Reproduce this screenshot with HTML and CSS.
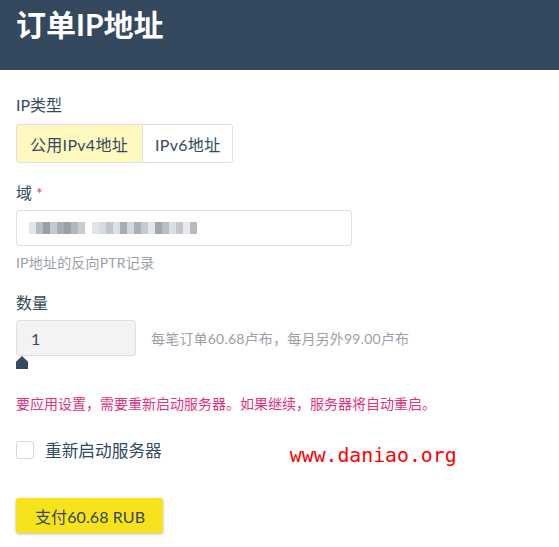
FILE: index.html
```html
<!DOCTYPE html>
<html lang="zh">
<head>
<meta charset="utf-8">
<link rel="stylesheet" href="styles.css">
</head>
<body>
<header class="header">
  <h1 class="title">订单IP地址</h1>
</header>
<main class="content">
  <div class="field field-type">
    <div class="label">IP类型</div>
    <div class="toggle">
      <button class="toggle-btn active">公用IPv4地址</button>
      <button class="toggle-btn">IPv6地址</button>
    </div>
  </div>
  <div class="field field-domain">
    <div class="label">域 <span class="req">*</span></div>
    <div class="input input-wide">
      <div class="blur">
        <i style="background:#e4e6e9"></i><i style="background:#b7bcc3"></i><i style="background:#9aa0a8"></i><i style="background:#c6cad0"></i><i style="background:#a7adb5"></i><i style="background:#9aa0a8"></i><i style="background:#b2b7be"></i><i style="background:#c9ccd1"></i><i style="background:#fff"></i><i style="background:#e2e4e7"></i><i style="background:#d6d9dd"></i><i style="background:#c1c5cb"></i><i style="background:#dde0e3"></i><i style="background:#a7adb5"></i><i style="background:#d4d7db"></i><i style="background:#aab0b7"></i><i style="background:#c6cad0"></i><i style="background:#e3e5e8"></i><i style="background:#a0a6ae"></i><i style="background:#b9bec4"></i><i style="background:#dde0e3"></i><i style="background:#c3c7cc"></i><i style="background:#e7e9eb"></i><i style="background:#b7bcc3"></i>
      </div>
    </div>
    <div class="help">IP地址的反向PTR记录</div>
  </div>
  <div class="field field-qty">
    <div class="label">数量</div>
    <div class="qty-row">
      <div class="input input-qty">1</div>
      <div class="qty-note">每笔订单60.68卢布，每月另外99.00卢布</div>
    </div>
    <div class="slider-mark"></div>
  </div>
  <p class="warn">要应用设置，需要重新启动服务器。如果继续，服务器将自动重启。</p>
  <div class="check-row">
    <label class="check"><span class="box"></span><span class="check-text">重新启动服务器</span></label>
    <span class="watermark">www.daniao.org</span>
  </div>
  <button class="pay">支付60.68 RUB</button>
</main>
</body>
</html>
```

FILE: styles.css
```css
* { box-sizing: border-box; }
html, body { margin: 0; padding: 0; background: #fff; }
body {
  font-family: Lato, "Noto Sans CJK SC", sans-serif;
  color: #34495e;
  width: 559px;
  height: 547px;
  overflow: hidden;
}
.header {
  background: #34495e;
  height: 70px;
  padding: 0 16px;
}
.title {
  margin: 0;
  font-size: 30px;
  font-weight: 700;
  color: #fff;
  line-height: 46px;
  padding-top: 1px;
}
.content { padding: 0 16px; }
.label {
  font-size: 16px;
  line-height: 22px;
}
.req { color: #e0327f; }
.field-type { padding-top: 24px; }
.field-type .label { margin-bottom: 8px; }
.toggle {
  display: inline-flex;
  border: 1px solid #dcdfe3;
  border-radius: 3px;
  height: 39px;
  overflow: hidden;
}
.toggle-btn {
  font-family: inherit;
  font-size: 16px;
  letter-spacing: 0.3px;
  color: #34495e;
  background: #fff;
  border: none;
  padding: 0 12px 0 12px;
  margin: 0;
  height: 100%;
}
.toggle-btn.active {
  background: #fff9c0;
  border-right: 1px solid #dcdfe3;
  padding: 0 14px 0 13px;
}
.field-domain { padding-top: 19px; }
.field-domain .label { margin-bottom: 6px; }
.input {
  border: 1px solid #dcdfe3;
  border-radius: 3px;
  height: 36px;
  font-size: 16px;
  display: flex;
  align-items: center;
}
.input-wide { width: 336px; padding-left: 12px; }
.blur { display: flex; height: 12px; }
.blur i { display: block; width: 7px; height: 12px; }
.help {
  font-size: 14px;
  color: #9aa0a7;
  margin-top: 6px;
  line-height: 22px;
  letter-spacing: 0.2px;
}
.field-qty { padding-top: 18px; }
.field-qty .label { margin-bottom: 6px; }
.qty-row { display: flex; align-items: center; gap: 15px; }
.input-qty {
  width: 120px;
  background: #f3f3f3;
  padding-left: 14px;
}
.qty-note { font-size: 14px; color: #9aa0a7; letter-spacing: 0.2px; }
.slider-mark {
  width: 12px;
  height: 13px;
  background: #34495e;
  clip-path: polygon(50% 0, 100% 45%, 100% 100%, 0 100%, 0 45%);
}
.warn {
  margin: 24px 0 0;
  font-size: 14px;
  line-height: 22px;
  color: #e0327f;
}
.check-row {
  display: flex;
  align-items: center;
  margin-top: 22px;
  height: 26px;
}
.check { display: flex; align-items: center; }
.box {
  width: 18px;
  height: 18px;
  border: 1px solid #d4d8dd;
  border-radius: 3px;
  background: #fff;
}
.check-text { font-size: 16.7px; margin-left: 11px; }
.watermark {
  font-family: "DejaVu Sans Mono", "Liberation Mono", monospace;
  font-size: 19.8px;
  color: #ff0000;
  margin-left: 128px;
  margin-top: 10px;
}
.pay {
  display: block;
  margin-top: 35px;
  height: 35px;
  padding: 0 18px 0 19px;
  font-family: inherit;
  font-size: 16px;
  letter-spacing: 0.1px;
  color: #34495e;
  background: #f7e31c;
  border: none;
  border-radius: 3px;
  box-shadow: 0 1px 3px rgba(0,0,0,0.3);
}
```
